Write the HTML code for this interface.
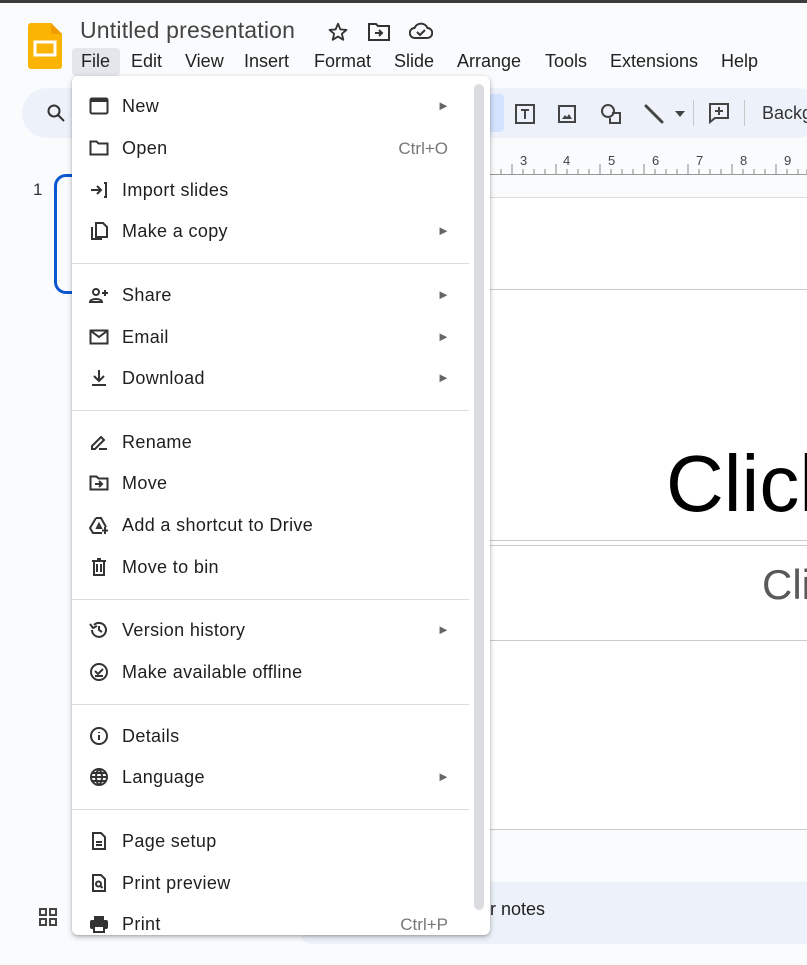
<!DOCTYPE html>
<html><head><meta charset="utf-8"><style>
body{margin:0;width:807px;height:965px;background:#f9fbfd;font-family:"Liberation Sans",Arial,sans-serif;position:relative;overflow:hidden;color:#1f1f1f}
.a{position:absolute}
.mi{position:absolute;left:122px;font-size:18px;letter-spacing:0.35px;color:#1f1f1f;line-height:20px}
.ic{position:absolute;left:89px;width:20px;height:20px}
.ar{position:absolute;left:437px;font-size:13px;color:#666}
.sc{position:absolute;right:359px;font-size:17px;color:#777}
.sep{position:absolute;left:72px;width:397px;height:1px;background:#dadce0}
.menu span{white-space:nowrap}
</style></head><body>
<div class="a" style="left:0;top:0;width:807px;height:3px;background:#3c3c3c"></div>
<svg class="a" style="left:28px;top:23px" width="34" height="46" viewBox="0 0 34 46"><path d="M3 0H23L34 11V43a3 3 0 0 1-3 3H3a3 3 0 0 1-3-3V3a3 3 0 0 1 3-3z" fill="#fbb404"/><path d="M23 0L34 11H25a2 2 0 0 1-2-2z" fill="#f19c00"/><rect x="7" y="19" width="20" height="13" fill="none" stroke="#fff" stroke-width="3"/></svg>
<div class="a" style="left:80px;top:17px;font-size:23px;color:#444;letter-spacing:0.2px">Untitled presentation</div>
<svg class="a" style="left:327px;top:21px" width="22" height="22" viewBox="0 0 24 24"><path d="M12 3l2.6 6.2 6.6.5-5 4.3 1.6 6.5L12 17l-5.8 3.5 1.6-6.5-5-4.3 6.6-.5z" fill="none" stroke="#333" stroke-width="2" stroke-linejoin="round"/></svg>
<svg class="a" style="left:367px;top:21px" width="24" height="22" viewBox="0 0 24 22"><path d="M2 3h7l2 2h11v14H2z" fill="none" stroke="#333" stroke-width="2"/><path d="M8 12h7M12 9l3 3-3 3" fill="none" stroke="#333" stroke-width="2"/></svg>
<svg class="a" style="left:409px;top:22px" width="24" height="18" viewBox="0 0 24 18"><path d="M6 16a5 5 0 0 1-.5-10A7 7 0 0 1 18.5 6 5 5 0 0 1 18 16z" fill="none" stroke="#333" stroke-width="2"/><path d="M8 10l3 3 5-5" fill="none" stroke="#333" stroke-width="2"/></svg>
<div class="a" style="left:72px;top:48px;width:48px;height:28px;background:#e3e6ea;border-radius:4px"></div>
<div class="a" style="top:51px;font-size:18px;color:#222;left:0;width:807px">
<span class="a" style="left:81px">File</span><span class="a" style="left:131px">Edit</span><span class="a" style="left:185px">View</span><span class="a" style="left:244px">Insert</span><span class="a" style="left:314px">Format</span><span class="a" style="left:394px">Slide</span><span class="a" style="left:457px">Arrange</span><span class="a" style="left:545px">Tools</span><span class="a" style="left:610px">Extensions</span><span class="a" style="left:721px">Help</span></div>
<div class="a" style="left:22px;top:88px;width:800px;height:50px;background:#edf2fa;border-radius:25px"></div>
<svg class="a" style="left:46px;top:103px" width="20" height="20" viewBox="0 0 20 20"><circle cx="8" cy="8" r="5.5" fill="none" stroke="#333" stroke-width="2"/><path d="M12 12l6 6" stroke="#333" stroke-width="2"/></svg>
<div class="a" style="left:480px;top:94px;width:24px;height:38px;background:#d3e3fd;border-radius:4px"></div>
<svg class="a" style="left:513px;top:102px" width="24" height="24" viewBox="0 0 24 24" fill="none" stroke="#444" stroke-width="2"><rect x="3" y="3" width="18" height="18"/><path d="M8 8h8M12 8v9"/></svg>
<svg class="a" style="left:557px;top:104px" width="20" height="20" viewBox="0 0 20 20"><rect x="2" y="2" width="16" height="16" fill="none" stroke="#444" stroke-width="2"/><path d="M5 15l3-4 2 2 2-3 3 5z" fill="#444"/></svg>
<svg class="a" style="left:599px;top:102px" width="24" height="24" viewBox="0 0 24 24" fill="none" stroke="#444" stroke-width="2"><circle cx="9" cy="9" r="6"/><path d="M13 11h8v10h-10v-5"/></svg>
<svg class="a" style="left:642px;top:102px" width="24" height="24" viewBox="0 0 24 24"><path d="M4 4l16 16" stroke="#444" stroke-width="3" stroke-linecap="round"/></svg>
<div class="a" style="left:675px;top:111px;border:5px solid transparent;border-top:6px solid #444"></div>
<div class="a" style="left:693px;top:100px;width:1px;height:26px;background:#c7c7c7"></div>
<svg class="a" style="left:707px;top:101px" width="24" height="24" viewBox="0 0 24 24" fill="none" stroke="#444" stroke-width="2"><path d="M3 3h18v14H8l-5 4z"/><path d="M12 6v8M8 10h8"/></svg>
<div class="a" style="left:744px;top:100px;width:1px;height:26px;background:#c7c7c7"></div>
<div class="a" style="left:762px;top:103px;font-size:18px;color:#333">Backg</div>
<div class="a" style="left:490px;top:174px;width:317px;height:1px;background:#999"></div>
<div class="a" style="left:490px;top:153px;font-size:13px;color:#444;width:317px">
<span class="a" style="left:30px">3</span><span class="a" style="left:73px">4</span><span class="a" style="left:118px">5</span><span class="a" style="left:162px">6</span><span class="a" style="left:206px">7</span><span class="a" style="left:250px">8</span><span class="a" style="left:294px">9</span></div>
<svg class="a" style="left:490px;top:164px" width="317" height="10"><g stroke="#888" stroke-width="1">
<path d="M11 5v5M22 0v10M33 5v5M44 5v5M55 5v5M66 0v10M77 5v5M88 5v5M99 5v5M110 0v10M121 5v5M132 5v5M143 5v5M154 0v10M165 5v5M176 5v5M187 5v5M198 0v10M209 5v5M220 5v5M231 5v5M242 0v10M253 5v5M264 5v5M275 5v5M286 0v10M297 5v5M308 5v5M317 5v5"/></g></svg>
<div class="a" style="left:490px;top:197px;width:317px;height:631px;background:#fff;border-top:1px solid #ddd;border-bottom:1px solid #ccc"></div>
<div class="a" style="left:490px;top:289px;width:317px;height:1px;background:#ccc"></div>
<div class="a" style="left:490px;top:540px;width:317px;height:1px;background:#ccc"></div>
<div class="a" style="left:490px;top:545px;width:317px;height:1px;background:#ccc"></div>
<div class="a" style="left:490px;top:640px;width:317px;height:1px;background:#ccc"></div>
<div class="a" style="left:666px;top:438px;font-size:80px;color:#000;white-space:nowrap">Click</div>
<div class="a" style="left:762px;top:561px;font-size:42px;color:#595959;white-space:nowrap">Cli</div>
<div class="a" style="left:300px;top:882px;width:520px;height:62px;background:#edf2fa;border-radius:12px"></div>
<div class="a" style="left:480px;top:899px;font-size:18px;color:#222">er notes</div>
<div class="a" style="left:33px;top:180px;font-size:17px;color:#333">1</div>
<div class="a" style="left:54px;top:174px;width:40px;height:114px;border:3px solid #0b57d0;border-radius:12px"></div>
<svg class="a" style="left:38px;top:907px" width="20" height="20" viewBox="0 0 20 20" fill="none" stroke="#444" stroke-width="2"><rect x="2" y="2" width="6" height="6"/><rect x="12" y="2" width="6" height="6"/><rect x="2" y="12" width="6" height="6"/><rect x="12" y="12" width="6" height="6"/></svg>
<div class="a menu" style="left:72px;top:76px;width:418px;height:859px;background:#fff;border-radius:6px;box-shadow:0 2px 6px rgba(0,0,0,.25),0 1px 2px rgba(0,0,0,.15)">
<div class="a" style="left:402px;top:8px;width:10px;height:826px;background:#dadce0;border-radius:5px"></div>
</div>
<div class="a menu" style="left:0;top:0;width:807px;height:965px">
<svg class="ic" style="top:96px" viewBox="0 0 20 20"><rect x="1.5" y="2.5" width="17" height="15" rx="1.5" fill="none" stroke="#333" stroke-width="2"/><rect x="2" y="3" width="16" height="3" fill="#333"/></svg>
<span class="mi" style="top:96px">New</span><span class="ar" style="top:98px">►</span>
<svg class="ic" style="top:138px" viewBox="0 0 20 20"><path d="M1.5 3.5h6l2 2h9v11h-17z" fill="none" stroke="#333" stroke-width="2"/></svg>
<span class="mi" style="top:138px">Open</span><span class="sc" style="top:139px">Ctrl+O</span>
<svg class="ic" style="top:180px" viewBox="0 0 20 20" fill="none" stroke="#333" stroke-width="2"><path d="M2 10h10M8 6l4 4-4 4M15 3h2v14h-2"/></svg>
<span class="mi" style="top:180px">Import slides</span>
<svg class="ic" style="top:221px" viewBox="0 0 20 20" fill="none" stroke="#333" stroke-width="2"><path d="M7 2h7l4 4v10H7z"/><path d="M3 6v12h10"/></svg>
<span class="mi" style="top:221px">Make a copy</span><span class="ar" style="top:223px">►</span>
<div class="sep" style="top:263px"></div>
<svg class="ic" style="top:285px" viewBox="0 0 20 20" fill="none" stroke="#333" stroke-width="2"><circle cx="7" cy="7" r="3"/><path d="M1 17c0-4 12-4 12 0zM16 5v6M13 8h6"/></svg>
<span class="mi" style="top:285px">Share</span><span class="ar" style="top:287px">►</span>
<svg class="ic" style="top:327px" viewBox="0 0 20 20" fill="none" stroke="#333" stroke-width="2"><rect x="1.5" y="3.5" width="17" height="13"/><path d="M2 4l8 6 8-6"/></svg>
<span class="mi" style="top:327px">Email</span><span class="ar" style="top:329px">►</span>
<svg class="ic" style="top:368px" viewBox="0 0 20 20" fill="none" stroke="#333" stroke-width="2"><path d="M10 2v11M5 8l5 5 5-5M3 17h14"/></svg>
<span class="mi" style="top:368px">Download</span><span class="ar" style="top:370px">►</span>
<div class="sep" style="top:410px"></div>
<svg class="ic" style="top:432px" viewBox="0 0 20 20" fill="none" stroke="#333" stroke-width="2"><path d="M3 17v-3L12 5l3 3-9 9z"/><path d="M10 17h8"/></svg>
<span class="mi" style="top:432px">Rename</span>
<svg class="ic" style="top:473px" viewBox="0 0 20 20" fill="none" stroke="#333" stroke-width="2"><path d="M1.5 3.5h6l2 2h9v11h-17z"/><path d="M6 11h6M10 8l3 3-3 3"/></svg>
<span class="mi" style="top:473px">Move</span>
<svg class="ic" style="top:515px" viewBox="0 0 20 20" fill="none" stroke="#333" stroke-width="2"><path d="M7 3h5l5 9M7 3L1 13l3 5h9M8 13l2-4 2 4zM16 12v7M13 15.5h6"/></svg>
<span class="mi" style="top:515px">Add a shortcut to Drive</span>
<svg class="ic" style="top:557px" viewBox="0 0 20 20" fill="none" stroke="#333" stroke-width="2"><path d="M3 4h14M8 2h4M5 4v14h10V4M8 7v8M12 7v8"/></svg>
<span class="mi" style="top:557px">Move to bin</span>
<div class="sep" style="top:599px"></div>
<svg class="ic" style="top:620px" viewBox="0 0 20 20" fill="none" stroke="#333" stroke-width="2"><path d="M3 10a7 7 0 1 0 2-5M1 4l3 4 4-2M10 6v4l3 2"/></svg>
<span class="mi" style="top:620px">Version history</span><span class="ar" style="top:622px">►</span>
<svg class="ic" style="top:662px" viewBox="0 0 20 20" fill="none" stroke="#333" stroke-width="2"><circle cx="10" cy="10" r="8"/><path d="M6 9l3 3 5-5M6 14h8"/></svg>
<span class="mi" style="top:662px">Make available offline</span>
<div class="sep" style="top:704px"></div>
<svg class="ic" style="top:726px" viewBox="0 0 20 20" fill="none" stroke="#333" stroke-width="2"><circle cx="10" cy="10" r="8"/><path d="M10 9v5M10 6v1"/></svg>
<span class="mi" style="top:726px">Details</span>
<svg class="ic" style="top:767px" viewBox="0 0 20 20" fill="none" stroke="#333" stroke-width="2"><circle cx="10" cy="10" r="8"/><path d="M2 10h16M10 2c-4 4-4 12 0 16M10 2c4 4 4 12 0 16M3.5 6h13M3.5 14h13"/></svg>
<span class="mi" style="top:767px">Language</span><span class="ar" style="top:769px">►</span>
<div class="sep" style="top:809px"></div>
<svg class="ic" style="top:831px" viewBox="0 0 20 20" fill="none" stroke="#333" stroke-width="2"><path d="M4 2h8l4 4v12H4z"/><path d="M7 11h6M7 14h6"/></svg>
<span class="mi" style="top:831px">Page setup</span>
<svg class="ic" style="top:873px" viewBox="0 0 20 20" fill="none" stroke="#333" stroke-width="2"><path d="M4 2h8l4 4v12H4z"/><circle cx="9.5" cy="11" r="2.5"/><path d="M11.5 13l2 2"/></svg>
<span class="mi" style="top:873px">Print preview</span>
<svg class="ic" style="top:914px" viewBox="0 0 20 20"><rect x="5" y="2" width="10" height="4" fill="#333"/><rect x="1" y="6" width="18" height="9" rx="2" fill="#333"/><rect x="5" y="12" width="10" height="6" fill="#fff" stroke="#333" stroke-width="2"/></svg>
<span class="mi" style="top:914px">Print</span><span class="sc" style="top:915px">Ctrl+P</span>
</div>
</body></html>
